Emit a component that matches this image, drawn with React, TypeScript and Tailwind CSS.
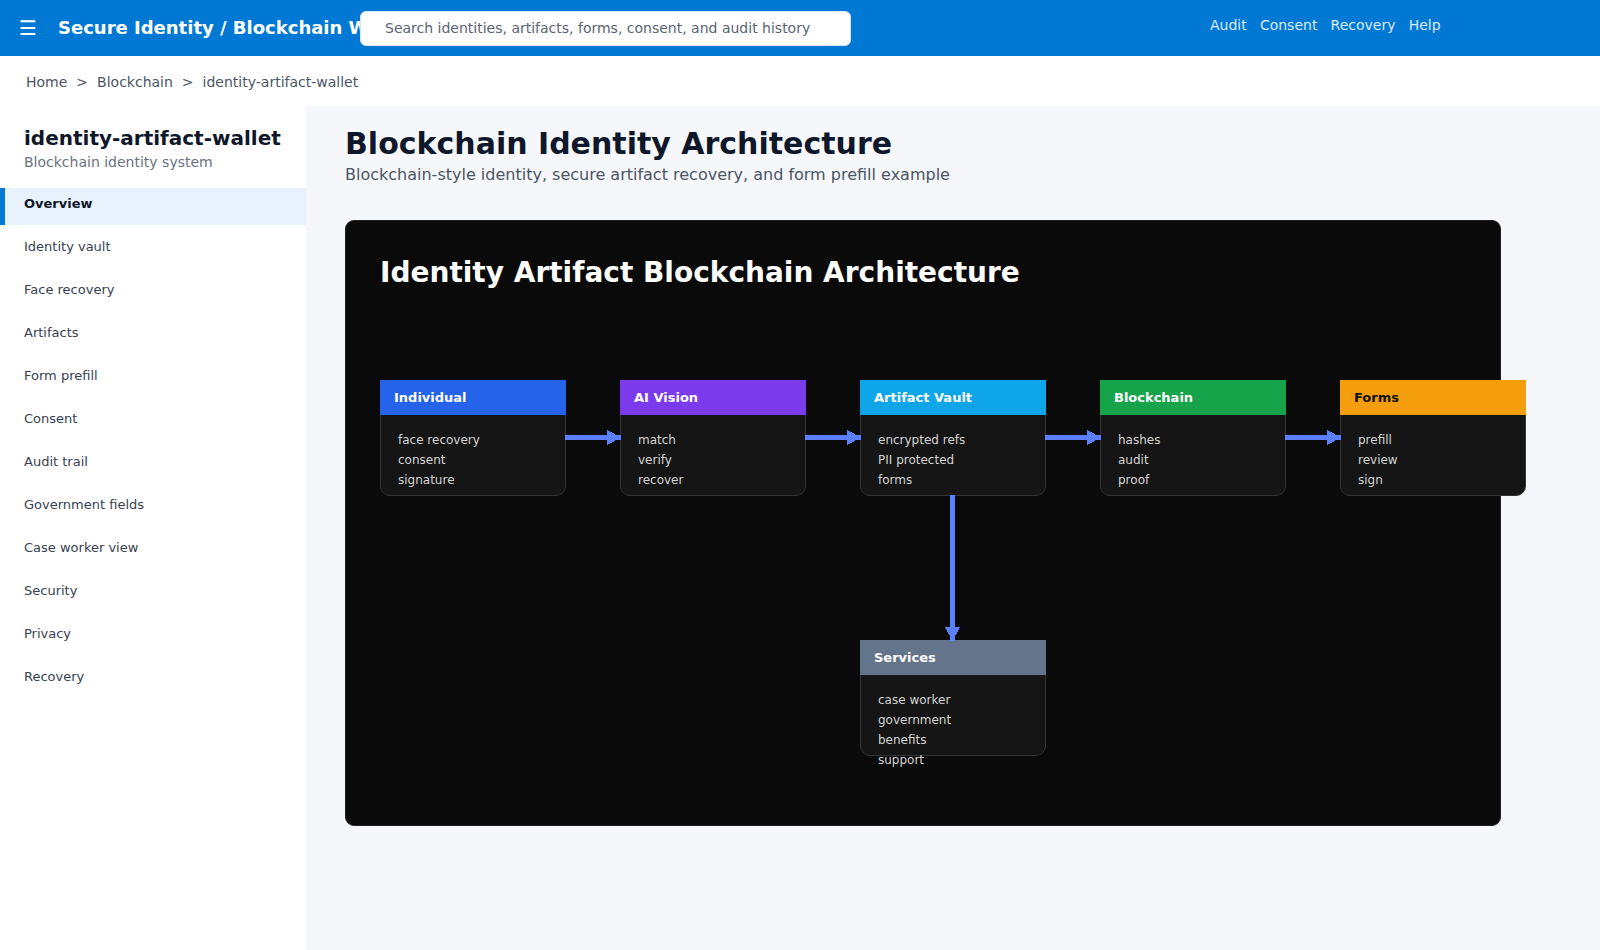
import React from "react";

const NAV = ["Overview","Identity vault","Face recovery","Artifacts","Form prefill","Consent","Audit trail","Government fields","Case worker view","Security","Privacy","Recovery"];

type N = { t: string; c: string; x: number; y: number; items: string[]; dark?: boolean };
const NODES: N[] = [
  { t: "Individual", c: "bg-[#2563eb]", x: 34, y: 159, items: ["face recovery","consent","signature"] },
  { t: "AI Vision", c: "bg-[#7c3aed]", x: 274, y: 159, items: ["match","verify","recover"] },
  { t: "Artifact Vault", c: "bg-[#0ea5e9]", x: 514, y: 159, items: ["encrypted refs","PII protected","forms"] },
  { t: "Blockchain", c: "bg-[#16a34a]", x: 754, y: 159, items: ["hashes","audit","proof"] },
  { t: "Forms", c: "bg-[#f59e0b]", x: 994, y: 159, items: ["prefill","review","sign"], dark: true },
  { t: "Services", c: "bg-[#64748b]", x: 514, y: 419, items: ["case worker","government","benefits","support"] },
];

function Node({ n }: { n: N }) {
  return (
    <div className="absolute w-[186px] h-[116px] bg-[#151515] border border-[#333333] rounded-[10px] z-10" style={{ left: n.x, top: n.y }}>
      <div className={`${n.c} -mx-px -mt-px h-[35px] flex items-center pl-[14px] text-[13px] font-bold ${n.dark ? "text-[#111111]" : "text-white"}`}>{n.t}</div>
      <ul className="pt-[15px] pl-[17px] text-[12px] leading-[20px] text-[#d4d4d4]">
        {n.items.map((i) => <li key={i}>{i}</li>)}
      </ul>
    </div>
  );
}

function HArrow({ x }: { x: number }) {
  return (
    <svg className="absolute z-20" style={{ left: x, top: 209 }} width="56" height="15" viewBox="0 0 56 15" shapeRendering="crispEdges">
      <rect x="0" y="5" width="56" height="5" fill="#5b7fff" />
      <polygon points="42,0 56,7.5 42,15" fill="#5b7fff" />
    </svg>
  );
}

export default function App() {
  return (
    <div className="w-[1600px] h-[950px] overflow-hidden flex flex-col bg-white font-['DejaVu_Sans',sans-serif]">
      <header className="h-[56px] shrink-0 bg-[#0078d4] flex items-center text-white">
        <span className="ml-[19px] w-[39px] shrink-0 -mt-[1px] text-[20px] leading-none">☰</span>
        <div className="w-[302px] shrink-0 -mt-[1px] whitespace-nowrap text-[18px] font-bold">Secure Identity / Blockchain Wallet</div>
        <div className="relative z-10 w-[491px] h-[35px] shrink-0 mt-[1px] bg-white rounded-[6px] flex items-center pl-[24px] text-[14px] text-[#5a6472] border border-[#d8e4f2]">Search identities, artifacts, forms, consent, and audit history</div>
        <nav className="ml-[359px] -mt-[5px] flex gap-[13.2px] text-[14px] text-[#dcebf9]">
          <span>Audit</span><span>Consent</span><span>Recovery</span><span>Help</span>
        </nav>
      </header>
      <div className="h-[50px] shrink-0 flex items-center pt-[2px] pl-[26px] gap-[9px] text-[14px] text-[#4b5563]">
        <span>Home</span><span>&gt;</span><span>Blockchain</span><span>&gt;</span><span>identity-artifact-wallet</span>
      </div>
      <div className="flex-1 flex min-h-0">
        <aside className="w-[306px] shrink-0 bg-white">
          <div className="pt-[19px] pl-[24px] h-[82px]">
            <div className="text-[20px] font-bold leading-[26px] text-[#0f172a]">identity-artifact-wallet</div>
            <div className="mt-[1px] text-[14px] leading-[20px] text-[#6b7280]">Blockchain identity system</div>
          </div>
          <ul className="flex flex-col gap-[6px]">
            {NAV.map((n, i) => (
              <li key={n} className={`h-[37px] flex items-center pb-[6px] text-[13px] ${i === 0 ? "bg-[#e8f2fd] border-l-[5px] border-[#0078d4] pl-[19px] font-bold text-[#0f172a]" : "pl-[24px] text-[#374151]"}`}>{n}</li>
            ))}
          </ul>
        </aside>
        <main className="flex-1 min-w-0 bg-[#f5f7fb] pl-[39px] pt-[19px]">
          <h1 className="text-[30px] leading-[38px] font-bold text-[#0f172a]">Blockchain Identity Architecture</h1>
          <p className="text-[16px] leading-[24px] text-[#4b5563]">Blockchain-style identity, secure artifact recovery, and form prefill example</p>
          <div className="relative mt-[33px] w-[1156px] h-[606px] bg-[#0a0a0a] border border-[#222222] rounded-[9px]">
            <h2 className="absolute left-[34px] top-[34px] text-[28px] leading-[36px] font-bold text-white">Identity Artifact Blockchain Architecture</h2>
            {NODES.map((n) => <Node key={n.t} n={n} />)}
            <HArrow x={219} /><HArrow x={459} /><HArrow x={699} /><HArrow x={939} />
            <svg className="absolute z-20" style={{ left: 599, top: 274 }} width="15" height="146" viewBox="0 0 15 146" shapeRendering="crispEdges">
              <rect x="5" y="0" width="5" height="146" fill="#5b7fff" />
              <polygon points="0,132 15,132 7.5,146" fill="#5b7fff" />
            </svg>
          </div>
        </main>
      </div>
    </div>
  );
}
